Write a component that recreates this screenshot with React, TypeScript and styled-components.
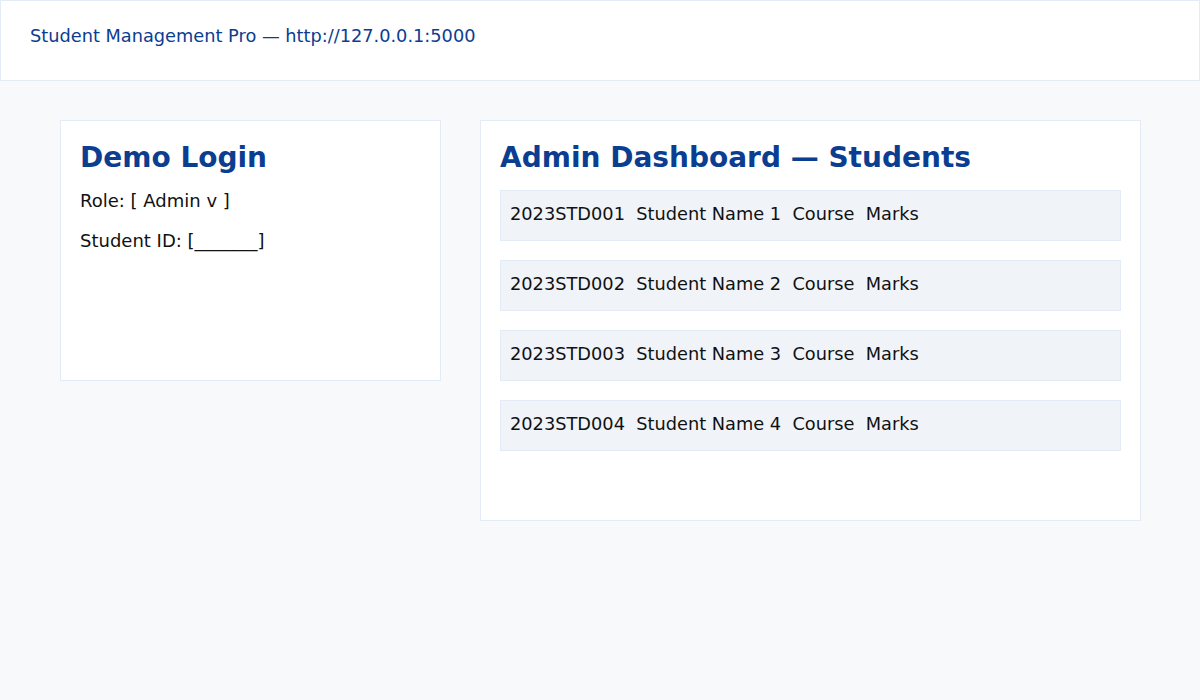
import React from 'react'
import styled, { createGlobalStyle } from 'styled-components'

const GlobalStyle = createGlobalStyle`
  html, body {
    margin: 0;
    padding: 0;
    background: #f7f9fb;
    font-family: "DejaVu Sans", Verdana, sans-serif;
  }
`

const Header = styled.header`
  height: 79px;
  box-sizing: content-box;
  background: #ffffff;
  border: 1px solid #e3ebf6;
  display: flex;
  align-items: center;
  padding: 0 29px;
  color: #0b3d91;
  font-size: 17.75px;
  & > span {
    margin-bottom: 9px;
  }
`

const Main = styled.main`
  display: flex;
  align-items: flex-start;
  gap: 39px;
  padding: 39px 59px 40px 60px;
`

const Card = styled.section<{ $width?: number; $height: number }>`
  box-sizing: border-box;
  ${(p) => (p.$width ? `width: ${p.$width}px;` : 'flex: 1;')}
  height: ${(p) => p.$height}px;
  background: #ffffff;
  border: 1px solid #e3ebf6;
  padding: 19px;
`

const Title = styled.h2<{ $gap: number }>`
  margin: 0 0 ${(p) => p.$gap}px;
  font-size: 28px;
  line-height: 36px;
  font-weight: bold;
  color: #0b3d91;
`

const Field = styled.p`
  margin: 0;
  font-size: 18px;
  line-height: 40px;
  color: #111111;
  white-space: pre;
`

const Rows = styled.div`
  display: flex;
  flex-direction: column;
  gap: 19px;
  margin-top: 14px;
`

const Row = styled.div`
  background: #f0f4f9;
  border: 1px solid #e3ebf6;
  padding: 12px 9px 16px;
  font-size: 17.78px;
  line-height: 21px;
  color: #111111;
  white-space: pre;
`

const students = [1, 2, 3, 4]

export default function App() {
  return (
    <>
      <GlobalStyle />
      <Header>
        <span>Student Management Pro — http://127.0.0.1:5000</span>
      </Header>
      <Main>
        <Card $width={381} $height={261}>
          <Title $gap={5}>Demo Login</Title>
          <Field>Role: [ Admin v ]</Field>
          <Field>Student ID: [_______]</Field>
        </Card>
        <Card $height={401}>
          <Title $gap={0}>Admin Dashboard — Students</Title>
          <Rows>
            {students.map((n) => (
              <Row key={n}>{`2023STD00${n}  Student Name ${n}  Course  Marks`}</Row>
            ))}
          </Rows>
        </Card>
      </Main>
    </>
  )
}
